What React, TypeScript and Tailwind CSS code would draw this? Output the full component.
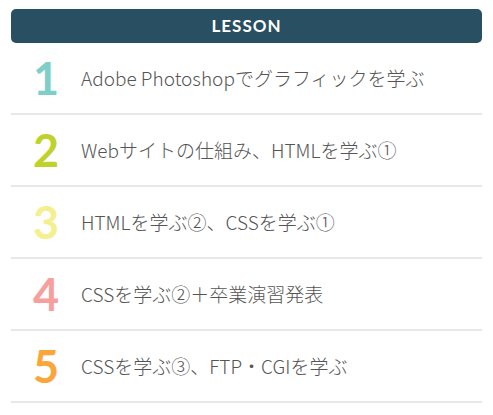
import * as React from 'react';

type Lesson = {
  no: number;
  title: string;
  color: string;
};

const lessons: Lesson[] = [
  { no: 1, title: 'Adobe Photoshopでグラフィックを学ぶ', color: 'text-[#7ecfc9]' },
  { no: 2, title: 'Webサイトの仕組み、HTMLを学ぶ①', color: 'text-[#bfd22b]' },
  { no: 3, title: 'HTMLを学ぶ②、CSSを学ぶ①', color: 'text-[#f4ef8f]' },
  { no: 4, title: 'CSSを学ぶ②＋卒業演習発表', color: 'text-[#f79f9d]' },
  { no: 5, title: 'CSSを学ぶ③、FTP・CGIを学ぶ', color: 'text-[#fba63a]' },
];

const App = () => {
  return (
    <div className="min-h-[415px] w-[493px] bg-white pt-[9px] px-[11px] font-['Lato','Noto_Sans_CJK_JP',sans-serif]">
      <div className="flex h-[34px] items-center justify-center rounded-[5px] bg-[#294f62] text-[17px] font-bold tracking-[0.06em] text-white">
        LESSON
      </div>
      <ul>
        {lessons.map((lesson) => (
          <li
            key={lesson.no}
            className="flex h-[72px] items-center border-b-2 border-[#e8e8e8] pl-[22px]"
          >
            <span className={`w-[48px] text-[45px] font-bold leading-none ${lesson.color}`}>
              {lesson.no}
            </span>
            <span className="font-['Noto_Sans_CJK_JP',sans-serif] text-[19px] font-light text-[#555555]">
              {lesson.title}
            </span>
          </li>
        ))}
      </ul>
    </div>
  );
};

export default App;
